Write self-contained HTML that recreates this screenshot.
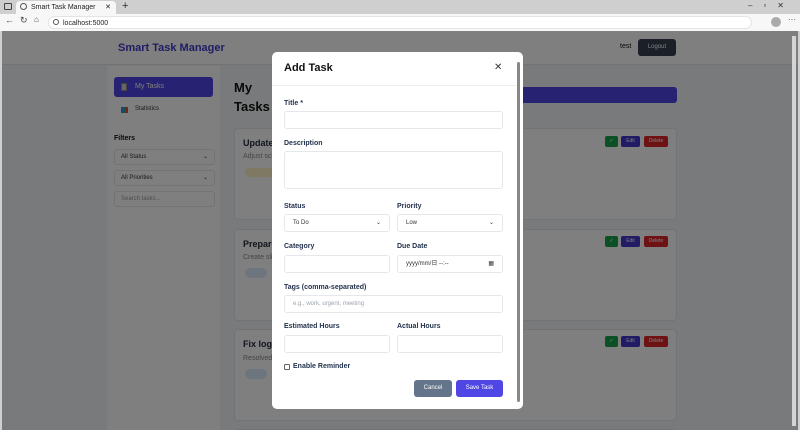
<!DOCTYPE html><html><head><style>
*{box-sizing:border-box;margin:0;padding:0}
body{width:800px;height:430px;overflow:hidden;font-family:"Liberation Sans",sans-serif;background:#cfcfcf;position:relative}
.abs{position:absolute}
.tabbar{left:0;top:0;width:800px;height:14px;background:#cfcfcf}
.tab{left:16px;top:1px;width:100px;height:13px;background:#f7f7f7;border-radius:4px 4px 0 0;font-size:7px;color:#222;padding:3px 0 0 15px}
.addr{left:0;top:14px;width:800px;height:17px;background:#f7f7f7}
.url{left:48px;top:16px;width:704px;height:13px;background:#fff;border-radius:7px;font-size:7px;color:#222;padding:3px 0 0 14px;border:1px solid #e4e4e4}
.page{left:2px;top:31px;width:796px;height:399px;background:#f3f4f6;overflow:hidden}
.hdr{left:0;top:0;width:796px;height:34px;background:#fff;border-bottom:1px solid #e5e7eb}
.brand{left:116px;top:11px;font-size:11px;font-weight:bold;color:#4338ca}
.side{left:105px;top:35px;width:113px;height:364px;background:#fff}
.nav1{left:112px;top:46px;width:99px;height:20px;background:#4f46e5;border-radius:3px;color:#fff;font-size:7px;line-height:20px;padding-left:21px}
.sel{background:#fff;border:1px solid #e5e7eb;border-radius:3px;font-size:6px;color:#333;line-height:14px;padding:0 6px}
.card{left:232px;width:443px;background:#fff;border-radius:4px;border:1px solid #e5e7eb}
.ct{font-size:9px;font-weight:bold;color:#1f2937;left:8px}
.btn{height:11px;border-radius:2px;font-size:5px;color:#fff;text-align:center;line-height:11px}
.ov{left:0;top:0;width:796px;height:399px;background:rgba(0,0,0,.5)}
.modal{left:272px;top:52px;width:251px;height:357px;background:#fff;border-radius:5px;overflow:hidden}
.lab{font-size:7px;font-weight:bold;color:#1f2f4a}
.inp{height:18px;border:1px solid #e5e7eb;border-radius:3px;background:#fff;font-size:6px;color:#333;line-height:16px;padding:0 8px}
.mb{height:17px;border-radius:3px;color:#fff;font-size:6px;text-align:center;line-height:17px}
</style></head><body>
<div class="abs tabbar"></div>
<div class="abs" style="left:4px;top:3px;width:8px;height:7px;border:1px solid #444;border-radius:1px"></div>
<div class="abs tab">Smart Task Manager<span style="position:absolute;right:5px;top:2px">✕</span></div>
<div class="abs" style="left:20px;top:3px;width:7px;height:7px;border:1px solid #555;border-radius:50%"></div>
<div class="abs" style="left:122px;top:0;font-size:11px;color:#333">+</div>
<div class="abs" style="left:748px;top:1px;font-size:8px;color:#333;letter-spacing:11px">–▫✕</div>
<div class="abs addr"></div>
<div class="abs" style="left:5px;top:15px;font-size:9px;color:#444">←</div>
<div class="abs" style="left:20px;top:15px;font-size:9px;color:#444">↻</div>
<div class="abs" style="left:34px;top:15px;font-size:8px;color:#444">⌂</div>
<div class="abs url">localhost:5000</div>
<div class="abs" style="left:53px;top:19px;width:6px;height:6px;border:1px solid #555;border-radius:50%"></div>
<div class="abs" style="left:771px;top:17px;width:10px;height:10px;background:#aaa;border-radius:50%"></div>
<div class="abs" style="left:788px;top:15px;font-size:8px;color:#444">···</div>
<div class="abs page">
 <div class="abs hdr"></div>
 <div class="abs brand">Smart Task Manager</div>
 <div class="abs" style="left:618px;top:12px;font-size:7px;color:#111">test</div>
 <div class="abs" style="left:636px;top:8px;width:38px;height:17px;background:#374151;border-radius:3px;color:#fff;font-size:6px;text-align:center;line-height:17px">Logout</div>
 <div class="abs side"></div>
 <div class="abs nav1">My Tasks</div>
 <div class="abs" style="left:119px;top:52px;width:6px;height:8px;background:#ccc;border:1px solid #888"></div>
 <div class="abs" style="left:119px;top:76px;width:7px;height:6px;background:linear-gradient(90deg,#3b82f6 33%,#10b981 33% 66%,#ef4444 66%)"></div>
 <div class="abs" style="left:133px;top:75px;font-size:6px;color:#333">Statistics</div>
 <div class="abs" style="left:112px;top:104px;font-size:7px;font-weight:bold;color:#111">Filters</div>
 <div class="abs sel" style="left:112px;top:118px;width:101px;height:16px">All Status<span style="float:right">⌄</span></div>
 <div class="abs sel" style="left:112px;top:139px;width:101px;height:16px">All Priorities<span style="float:right">⌄</span></div>
 <div class="abs sel" style="left:112px;top:160px;width:101px;height:16px;color:#999">Search tasks...</div>
 <div class="abs" style="left:232px;top:47px;font-size:13px;font-weight:bold;color:#111;line-height:19px">My<br>Tasks</div>
 <div class="abs" style="left:500px;top:56px;width:175px;height:16px;background:#4f46e5;border-radius:3px"></div>
 <div class="abs card" style="top:97px;height:92px"><div class="abs ct" style="top:9px">Update p</div></div>
 <div class="abs card" style="top:198px;height:92px"><div class="abs ct" style="top:9px">Prepare p</div></div>
 <div class="abs card" style="top:298px;height:92px"><div class="abs ct" style="top:9px">Fix login</div></div>
 <div class="abs card" style="top:398px;height:20px"></div>
 <div class="abs" style="left:241px;top:122px;font-size:7px;color:#888">Adjust sch</div>
 <div class="abs" style="left:241px;top:223px;font-size:7px;color:#888">Create slic</div>
 <div class="abs" style="left:241px;top:324px;font-size:7px;color:#888">Resolved</div>
 <div class="abs" style="left:243px;top:137px;width:30px;height:9px;background:#fef3c7;border-radius:5px"></div>
 <div class="abs" style="left:243px;top:237px;width:22px;height:10px;background:#dbeafe;border-radius:5px"></div>
 <div class="abs" style="left:243px;top:338px;width:22px;height:10px;background:#dbeafe;border-radius:5px"></div>
 <div class="abs btn" style="left:603px;top:105px;width:13px;background:#16a34a">✓</div>
 <div class="abs btn" style="left:619px;top:105px;width:19px;background:#4338ca">Edit</div>
 <div class="abs btn" style="left:642px;top:105px;width:24px;background:#dc2626">Delete</div>
 <div class="abs btn" style="left:603px;top:205px;width:13px;background:#16a34a">✓</div>
 <div class="abs btn" style="left:619px;top:205px;width:19px;background:#4338ca">Edit</div>
 <div class="abs btn" style="left:642px;top:205px;width:24px;background:#dc2626">Delete</div>
 <div class="abs btn" style="left:603px;top:305px;width:13px;background:#16a34a">✓</div>
 <div class="abs btn" style="left:619px;top:305px;width:19px;background:#4338ca">Edit</div>
 <div class="abs btn" style="left:642px;top:305px;width:24px;background:#dc2626">Delete</div>
 <div class="abs ov"></div>
 <div class="abs" style="left:790px;top:5px;width:4px;height:390px;background:#d4d4d4"></div>
</div>
<div class="abs modal">
 <div class="abs" style="left:12px;top:10px;font-size:11px;font-weight:bold;color:#111">Add Task</div>
 <div class="abs" style="left:222px;top:10px;font-size:10px;color:#333">✕</div>
 <div class="abs" style="left:0;top:33px;width:245px;height:1px;background:#eee"></div>
 <div class="abs" style="left:245px;top:10px;width:3px;height:340px;background:#888;border-radius:2px"></div>
 <div class="abs lab" style="left:12px;top:48px">Title *</div>
 <div class="abs inp" style="left:12px;top:59px;width:219px"></div>
 <div class="abs lab" style="left:12px;top:88px">Description</div>
 <div class="abs inp" style="left:12px;top:99px;width:219px;height:38px"></div>
 <div class="abs lab" style="left:12px;top:151px">Status</div>
 <div class="abs lab" style="left:125px;top:151px">Priority</div>
 <div class="abs inp" style="left:12px;top:162px;width:106px">To Do<span style="float:right">⌄</span></div>
 <div class="abs inp" style="left:125px;top:162px;width:106px">Low<span style="float:right">⌄</span></div>
 <div class="abs lab" style="left:12px;top:191px">Category</div>
 <div class="abs lab" style="left:125px;top:191px">Due Date</div>
 <div class="abs inp" style="left:12px;top:203px;width:106px"></div>
 <div class="abs inp" style="left:125px;top:203px;width:106px">yyyy/mm/日 --:--<span style="float:right">▦</span></div>
 <div class="abs lab" style="left:12px;top:232px">Tags (comma-separated)</div>
 <div class="abs inp" style="left:12px;top:243px;width:219px;color:#9ca3af">e.g., work, urgent, meeting</div>
 <div class="abs lab" style="left:12px;top:271px">Estimated Hours</div>
 <div class="abs lab" style="left:125px;top:271px">Actual Hours</div>
 <div class="abs inp" style="left:12px;top:283px;width:106px"></div>
 <div class="abs inp" style="left:125px;top:283px;width:106px"></div>
 <div class="abs" style="left:12px;top:312px;width:6px;height:6px;border:1px solid #666;border-radius:1px"></div>
 <div class="abs lab" style="left:21px;top:311px">Enable Reminder</div>
 <div class="abs mb" style="left:142px;top:328px;width:38px;background:#64748b">Cancel</div>
 <div class="abs mb" style="left:184px;top:328px;width:47px;background:#4f46e5">Save Task</div>
</div>
</body></html>
